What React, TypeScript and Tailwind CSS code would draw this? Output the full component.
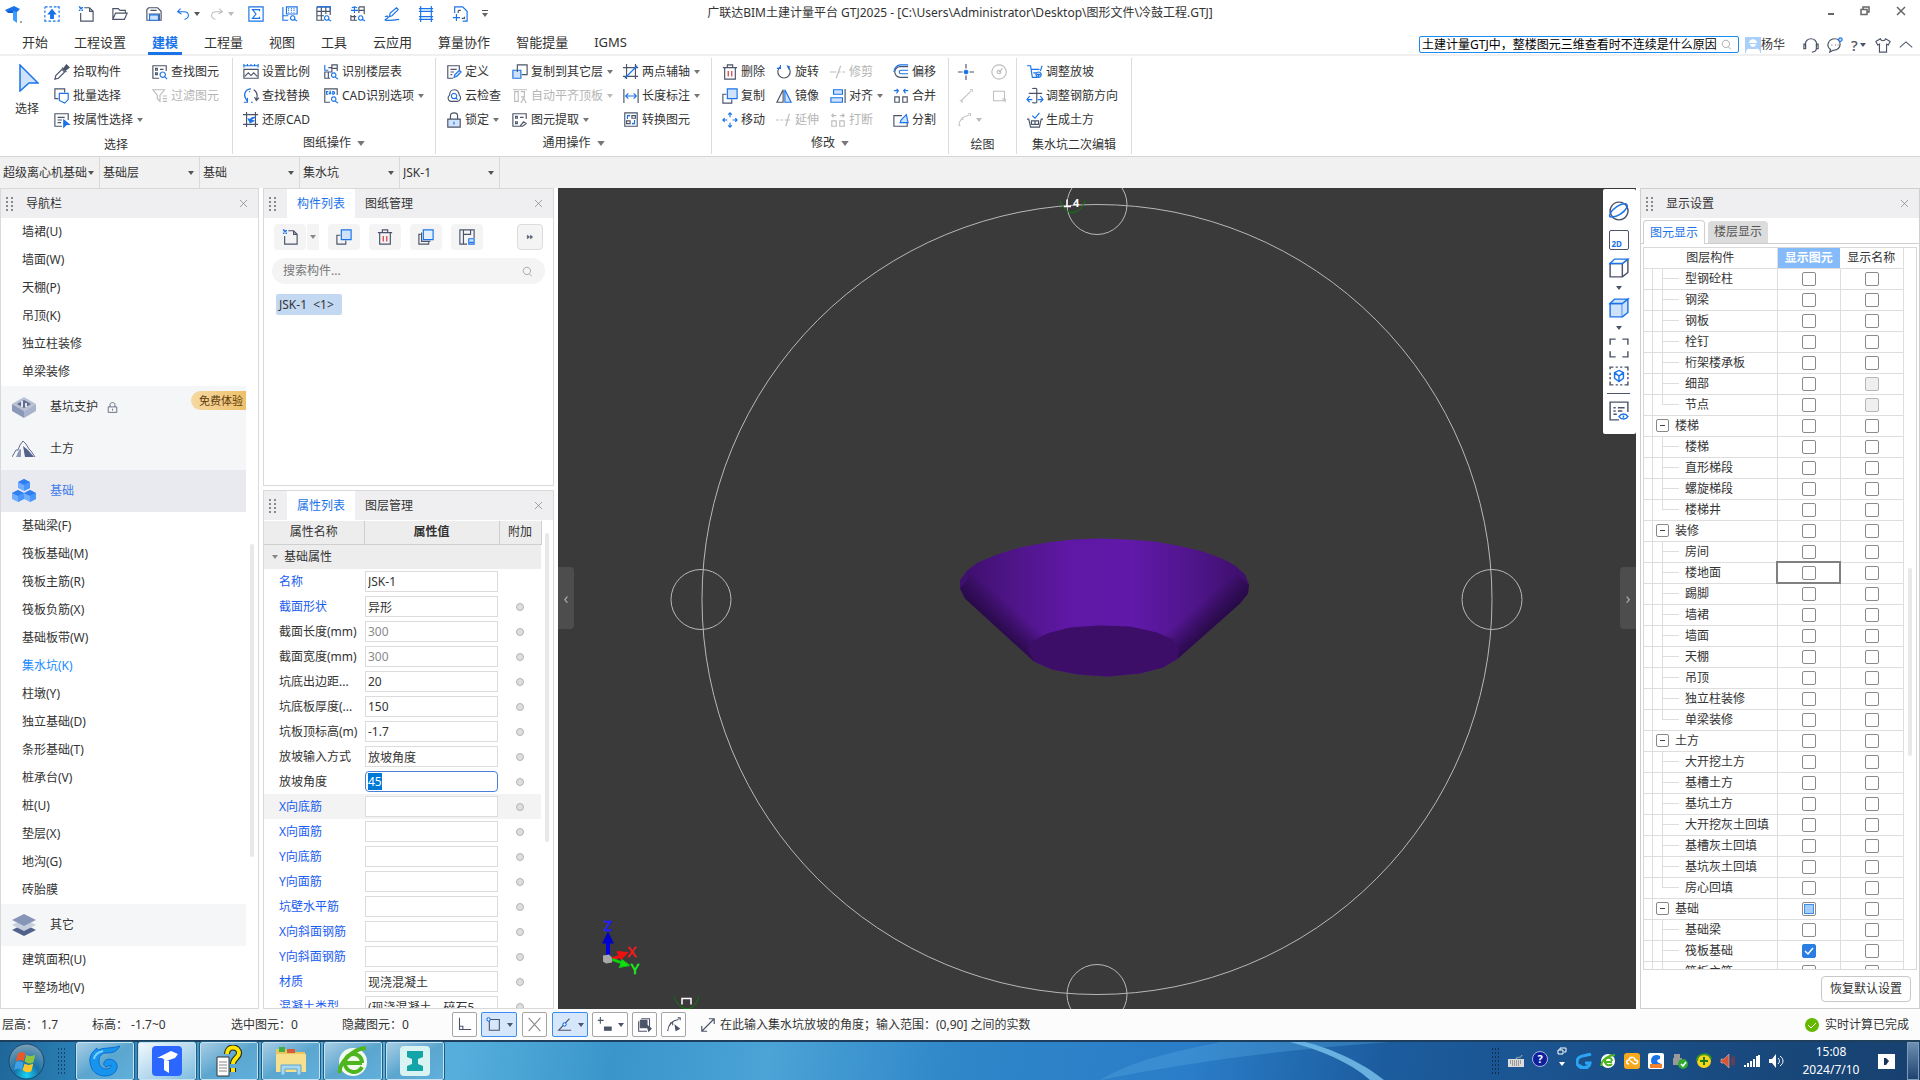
import React, { useEffect, useRef } from "react";
import clsx from "clsx";

// [stroke, path, fill]
type Stroke = [string, string, string?];

const B = "#1a73e8";
const D = "#4b5468";
const L = "#cfe2fb";
const G = "#bdbdbd";
const R = "#d93030";

const glyphs: Record<string, Stroke[]> = {
  recent: [[B, "M1 1h3M6 1h3M11 1h3M15 1h2v2M17 5v3M17 10v3M17 15v2h-2M13 17h-3M8 17H5M3 17H1v-2M1 13v-3M1 8V5M1 3V1"], [B, "M9 4l4 5h-2.5v5h-3V9H5z", B]],
  newFile: [[D, "M7 2h6l4 4v11H3V8M13 2v4h4"], [B, "M1 1h1v1h1v1h1V2h1V1M1 5h1V4M4 5h1V4"]],
  open: [[D, "M1 15V3h6l2 2h6v3M1 15L4 8h13l-3 7z"]],
  save: [[D, "M3 2h10l4 4v10H1V4zM5 5h7M3 9h12v7"], [B, "M4 10h10v6H4z", L]],
  undo: [[B, "M6 2L2 6l5 3M2 6h8c4 0 6 2 6 5s-2 4-5 5"]],
  redo: [[G, "M12 2l4 4-5 3M16 6H8C4 6 2 8 2 11s2 4 5 5"]],
  sigma: [[B, "M1 1h16v16H1zM13 6V4H5l4 5-4 5h8v-2"]],
  tableFind: [[B, "M1 1v15h6M1 11h6M5 1h12v8H5zM7 3h1M10 3h1M13 3h1M7 5h1M10 5h1M13 5h1M7 7h1M10 7h1M13 7h1"], [B, "M12 11a2.500 2.500 0 1 0 .1 0M14 15l3 2"]],
  gridFind: [[D, "M1 1h15v9M1 1v15h8M1 6h15M1 11h8M6 1v15M11 1v8"], [B, "M12 11a2.500 2.500 0 1 0 .1 0M14 15l3 2M1 1h15v4"]],
  swapFind: [[B, "M5 1v7M1 5h8M2 2l3-1 3 1M12 11a2.500 2.500 0 1 0 .1 0M14 15l3 2"], [D, "M10 1h6v8M10 1v7M1 10v6h7M1 12h6M5 10v6M10 5h6"]],
  brush: [[B, "M6 12l1-4 7-6 2 2-7 7zM6 12l3-1M1 12c4-2 5 1 1 3s8 1 15 0"]],
  rebar: [[B, "M3 0v18M15 0v18"], [B, "M1 3h16M1 6h16M1 12h16M1 15h16"]],
  addPage: [[B, "M3 8V1h9l5 5v11h-5M1 13h8M5 9v8"], [D, "M7 5h3M7 5v3M14 12v2h-3"]],
  cursor: [[B, "M2 1l14 13H8l-6 5z", L]],
  pick: [[D, "M1 17l1-4 7-7 3 3-7 7z"], [D, "M9 4l5 5M11 5l3-4 3 3-4 3z", D]],
  batch: [[D, "M5 12H1V1h11v4"], [B, "M6 6h10v7l-4 4-6-3z", "#fff"]],
  byProp: [[D, "M9 16H1V2h15v7M4 6h8M4 9h5M4 12h4"], [B, "M11 9l6 5h-3l-3 3z", B]],
  findEl: [[D, "M8 16H1V2h15v6M4 5h2v2H4zM9 6h4M4 10h2v2H4z"], [B, "M12 9a3 3 0 1 0 .1 0M14 14l3 3"]],
  filter: [[G, "M1 2h13L9 8v7l-3-3V8zM12 9h5M12 12h5M12 15h5"]],
  scale: [[B, "M1 2h16M1 0v4M17 0v4M5 2V0M9 2V0M13 2V0"], [D, "M1 6h16v10H1zM2 14l4-4 3 3 3-3 4 4"]],
  replace: [[D, "M12 2c3 2 5 6 3 11M13 10l2 4 3-3"], [B, "M9 1C3 1 0 7 3 12l2 3M5 11v5H1M9 16h2M7 4h1"]],
  restore: [[D, "M4 0v17M14 0v17M0 3h17M0 14h17"], [B, "M14 6c-4 0-6 1-6 4M6 8l2 4 4-2z", B]],
  floorTable: [[B, "M2 1v6h4"], [D, "M6 4h4V1h6v7M10 4v5H2v7h6M6 9v7M10 5h6"], [B, "M12 10a2.500 2.500 0 1 0 .1 0M14 15l3 2"]],
  cad: [[D, "M8 16H2V1h14v7"], [B, "M6 4H4v3h2M7 7l1-3 1 3M11 4v3h1l1-1V5l-1-1zM12 10a2.500 2.500 0 1 0 .1 0M14 15l3 2"]],
  define: [[D, "M8 16H2V2h13v5M5 6h7M5 9h4M5 12h2"], [B, "M9 15l1-3 5-5 2 2-5 5z", L]],
  cloud: [[D, "M5 15a4 4 0 0 1-1-7c0-8 10-8 11 0a4 4 0 0 1-2 7z"], [B, "M9 6a3 3 0 1 0 .1 0M11 11l2 2"]],
  lock: [[D, "M5 8V4c0-4 8-4 8 0v4"], [D, "M2 8h14v9H2z", L], [B, "M9 11v3"]],
  navLock: [[D, "M5 8V4c0-4 8-4 8 0v4M2 8h14v9H2zM9 11v3"]],
  copyFloor: [[B, "M1 7h9v9H1z", L], [D, "M6 9V1h11v11h-6"]],
  alignTop: [[G, "M1 2h16M3 4h4v11H3zM10 4h4v6h-4M10 17l3-6 3 6"]],
  extract: [[D, "M8 16H1V2h15v6M4 5h2v2H4zM9 6h4M4 11h2v2H4zM9 16l4-5 3 2-4 3z"]],
  twoPoint: [[D, "M4 0v17M14 0v17M0 4h17M0 14h17"], [B, "M2 16L16 2"]],
  length: [[D, "M1 1v16M17 1v16"], [B, "M3 9h12M6 6L3 9l3 3M12 6l3 3-3 3"]],
  convert: [[D, "M2 1h14v15H2zM10 4h4v3h-4zM4 10h4v3H4z"], [B, "M5 8V4h3M7 3v2M13 9v4h-3M11 12v2"]],
  trash: [[D, "M1 4h16M6 4V1h6v3M3 4v13h12V4"], [R, "M7 8v6M11 8v6"]],
  copy: [[D, "M5 7H1v10h10v-4"], [B, "M6 1h11v11H6z", L]],
  move: [[B, "M9 1v5M9 12v5M1 9h5M12 9h5M7 3l2-2 2 2M7 15l2 2 2-2M3 7L1 9l2 2M15 7l2 2-2 2"]],
  rotate: [[D, "M5 3a7 7 0 1 0 8 0"], [B, "M5 1v4H1M12 2l3 1-1 3"]],
  mirror: [[D, "M8 2v14H1z"], [B, "M10 2v14h7z", L]],
  extend: [[G, "M0 9h3M5 9h3M10 9h6M15 2l-4 14"]],
  trim: [[G, "M0 9h7M10 9h2M14 9h3M12 2l-5 14"]],
  align: [[D, "M17 1v16"], [B, "M4 2h10v5H4zM1 11h13v5H1z", L]],
  breakIt: [[G, "M2 10h5v6H2zM11 10h5v6h-5zM2 4h5M4 2L2 4l2 2M16 4h-5M14 2l2 2-2 2"]],
  offset: [[D, "M17 3H8a6 6 0 0 0 0 12h9"], [B, "M17 7H9a2 2 0 0 0 0 4h8M17 1H8a8 8 0 0 0-7 8"]],
  merge: [[D, "M2 10h5v6H2zM11 10h5v6h-5z"], [B, "M1 3h5M4 1l2 2-2 3M17 3h-5M14 1l-2 2 2 3"]],
  split: [[D, "M10 4H1v12h15v-5"], [B, "M8 12l1-3 6-6 2 9z", L]],
  point: [[D, "M9 0v5M9 13v5M0 9h5M13 9h5"], [B, "M9 7a2 2 0 1 0 .1 0", B]],
  line: [[G, "M3 15L15 3M1 15h3v3M14 1h3v3"]],
  arc: [[G, "M1 16C2 9 7 4 14 3M1 16h2M13 1h3v3M5 7l2 2"]],
  circle: [[G, "M9 1a8 8 0 1 0 .1 0M9 9l4-4M9 7a2 2 0 1 0 .1 0"]],
  rect: [[G, "M2 3h14v12H2zM13 13h4v4"]],
  slope: [[B, "M0 2h4l2 13h6M5 6h9M7 10h4M17 2l-2 6"], [B, "M13 9a3 3 0 1 0 .1 0M13 11v3M11 12h4", L]],
  rebarDir: [[D, "M6 1c0-1 5-1 5 0v15c0 1-5 1-5 0M2 6h15"], [B, "M3 9l-3 4 3 3M15 9l3 4-3 3M1 13h5M12 13h5"]],
  earth: [[B, "M6 4l3 3 5-6"], [D, "M0 8h2l2 9h10l2-9h2M5 10h8v4H5zM9 10v4"]],
  copyTo: [[D, "M3 6H1v11h11v-2M4 4v10h10"], [B, "M6 1h11v11H6z", "#e3f0ff"]],
  saveList: [[D, "M9 17H1V1h16v9M5 1v16M5 6h8V1"], [B, "M11 11h6v6h-6zM12 15h4", L]],
  orbit: [[D, "M9 1a8 8 0 1 0 .1 0"], [B, "M3 14C-2 16 1 9 7 5s11-3 9 1-9 9-13 8"]],
  cube: [[D, "M1 5h11v12H1zM12 17l5-4V1M12 5l5-4"], [B, "M1 5l4-4h12l-5 4z", "#ffffff"]],
  cubeFill: [[B, "M1 5h11v12H1z", L], [B, "M12 17l5-4V1l-5 4M1 5l4-4h12l-5 4z", L]],
  frame: [[D, "M1 6V1h5M12 1h5v5M17 12v5h-5M6 17H1v-5"]],
  isolate: [[D, "M1 3V1h3M6 1h2M10 1h2M14 1h3v3M17 6v2M17 10v2M17 14v3h-3M12 17h-2M8 17H6M4 17H1v-3M1 12v-2M1 8V6"], [B, "M9 4l4 2v5l-4 3-4-3V6zM5 6l4 3 4-3M9 9v5"]],
  layerEye: [[D, "M9 17H1V1h16v9M4 6h2M8 6h6M4 9h2M8 9h4M4 12h3"], [B, "M9 14c2-3 6-3 8 0-2 3-6 3-8 0zM13 13v2"]],
  ortho: [[D, "M3 1v14h14M3 11h4v4"]],
  snapRect: [[D, "M4 3h12v13H4z"], [B, "M3 1a2 2 0 1 0 .1 0", "#fff"]],
  cross: [["#888", "M2 1l14 16M16 1L2 17"]],
  angle: [[D, "M15 2L2 16h15"], [B, "M9 7a2 2 0 1 0 .1 0", "#fff"]],
  plusMinus: [[D, "M1 4h7M4 0v8"], [D, "M9 12h8v4H9z", D]],
  stack: [[D, "M2 5v12h10M5 2h10v12"], [D, "M4 4h8v9H4z", D], [D, "M12 10l5 4-3 3z", D]],
  polyArc: [[D, "M2 17C3 9 7 4 15 3M14 1h3v3M5 7h3v3"], [D, "M11 10l5 4-4 2z", D]],
  expand: [[D, "M2 16L16 2M10 2h6v6M2 10v6h6"]],
  headset: [[D, "M3 12C1 3 7 2 9 2s8 1 6 10M3 8H1v5h2zM15 8h2v5h-2zM15 13c0 3-2 4-5 4"]],
  chat: [[D, "M7 15l-4 2 1-3C-2 10 2 2 9 2s9 12-2 13M5 9h1M9 9h1M12 9h1"], [B, "M15 1a2 2 0 1 0 .1 0", L]],
  shirt: [[D, "M6 2L1 5l2 4 2-1v9h8V8l2 1 2-4-5-3c-1 3-5 3-6 0z"]],
  up: [[D, "M1 12l8-7 8 7"]],
  search: [["#999", "M8 2a6 6 0 1 0 .1 0M12 13l4 4"]],
  close: [["#777", "M2 2l14 14M16 2L2 16"]],
  more: [[D, "M3 5l5 4-5 4zM10 5l5 4-5 4z", D]],
};

function Glyph({ name, className = "size-4" }: { name: string; className?: string }) {
  return (
    <svg viewBox="0 0 18 18" className={clsx("shrink-0 overflow-visible", className)} aria-hidden="true">
      {glyphs[name].map(([stroke, d, fill], i) => (
        <path key={i} d={d} stroke={stroke} fill={fill ?? "none"} strokeWidth="1.3" />
      ))}
    </svg>
  );
}

function Caret({ className = "text-[#666]" }: { className?: string }) {
  return (
    <svg viewBox="0 0 6 4" className={clsx("h-1 w-1.5 shrink-0", className)} aria-hidden="true">
      <path d="M0 0h6L3 4z" fill="currentColor" />
    </svg>
  );
}

function Grip() {
  return (
    <span className="grid w-[7px] grid-cols-2 gap-x-[3px] gap-y-[2px]" aria-hidden="true">
      {Array.from({ length: 8 }, (_, i) => (
        <i key={i} className="size-[2px] bg-[#8a8a8a]" />
      ))}
    </span>
  );
}

/* ---------- title bar ---------- */

const quickTools = [
  { icon: "recent", label: "最近" },
  { icon: "newFile", label: "新建" },
  { icon: "open", label: "打开" },
  { icon: "save", label: "保存" },
  { icon: "undo", label: "撤销", caret: true },
  { icon: "redo", label: "恢复", caret: true },
  { icon: "sigma", label: "汇总计算" },
  { icon: "tableFind", label: "查看报表" },
  { icon: "gridFind", label: "查看工程量" },
  { icon: "swapFind", label: "查看计算式" },
  { icon: "brush", label: "编辑钢筋" },
  { icon: "rebar", label: "钢筋三维" },
  { icon: "addPage", label: "添加" },
];

function TitleBar() {
  return (
    <header className="relative flex h-[27px] items-center justify-between">
      <div className="flex items-center">
        <span className="flex w-[35px] justify-center pr-2">
          <svg viewBox="0 0 20 20" className="size-5" aria-label="GTJ">
            <path d="M1 6l9-4 6 3-3 3H9z" fill="#1a73e8" />
            <path d="M9 7l4 1v11l-4-3z" fill="#3aa0ff" />
            <path d="M1 6l8 1v2H4z" fill="#0f5fd0" />
            <circle cx="17" cy="18" r="1" fill="#888" />
          </svg>
        </span>
        {quickTools.map((t) => (
          <button key={t.label} aria-label={t.label} className="flex h-6 w-[34px] items-center justify-center gap-1">
            <Glyph name={t.icon} className={t.caret ? "size-[14px]" : "size-4"} />
            {t.caret && <Caret className={t.icon === "redo" ? "text-[#bbb]" : "text-[#555]"} />}
          </button>
        ))}
        <button aria-label="自定义快速访问" className="flex w-4 flex-col items-center gap-[2px]">
          <i className="h-px w-[6px] bg-[#555]" />
          <Caret />
        </button>
      </div>
      <h1 className="absolute inset-x-0 top-1 mx-auto w-fit text-[12px] leading-[18px] text-[#333]">
        广联达BIM土建计量平台 GTJ2025 - [C:\Users\Administrator\Desktop\图形文件\冷鼓工程.GTJ]
      </h1>
      <div className="flex items-center gap-[26px] pr-[14px] pb-[6px]">
        <button aria-label="最小化" className="flex size-[10px] items-end justify-end pb-px">
          <i className="h-[2px] w-[6px] bg-[#666]" />
        </button>
        <button aria-label="还原">
          <svg viewBox="0 0 10 10" className="size-[10px]" fill="none" stroke="#666">
            <path d="M3 3V1h6v5H7M1 3.500h6v5H1z" strokeWidth="1.500" />
          </svg>
        </button>
        <button aria-label="关闭">
          <svg viewBox="0 0 10 10" className="size-[10px]" stroke="#666" strokeWidth="1.500">
            <path d="M1 1l8 8M9 1L1 9" />
          </svg>
        </button>
      </div>
    </header>
  );
}

const menus = ["开始", "工程设置", "建模", "工程量", "视图", "工具", "云应用", "算量协作", "智能提量", "IGMS"];

function MenuBar() {
  return (
    <div className="flex h-[29px] items-center justify-between border-b-2 border-[#f0f0f0]">
      <nav className="flex h-[29px] pl-[14px]">
        {menus.map((m) => (
          <button
            key={m}
            className={clsx(
              "mx-1 border-b-[3px] px-1 pt-[6px] text-[13px] leading-5",
              m === "建模" ? "border-[#1a73e8] font-bold text-[#1a73e8]" : "border-transparent",
              "[&:not(:last-child)]:mr-[14px]"
            )}
          >
            {m}
          </button>
        ))}
      </nav>
      <div className="flex items-center pt-2">
        <div className="flex h-[17px] w-[320px] items-center rounded-xs border border-[#1a8cf0] bg-white pr-1.5 pl-0.5">
          <input
            aria-label="搜索帮助"
            defaultValue="土建计量GTJ中，整楼图元三维查看时不连续是什么原因"
            className="w-full min-w-0 text-[12px] text-black outline-none"
          />
          <Glyph name="search" className="ml-1 size-[11px]" />
        </div>
        <button className="ml-[6px] flex items-center text-[12px]">
          <svg viewBox="0 0 16 16" className="size-4">
            <path d="M0 0h16v16H0z" fill="#a9cffb" />
            <path d="M4 6c0-5 8-5 8 0H4zM5 7h6c0 4-6 4-6 0zM1 16c0-6 4-4 7-4s7-2 7 4z" fill="#fff" />
          </svg>
          杨华
        </button>
        <div className="ml-[18px] flex items-center gap-2 pr-[7px]">
          <button aria-label="客服"><Glyph name="headset" /></button>
          <button aria-label="消息"><Glyph name="chat" /></button>
          <button className="flex w-4 items-center gap-0.5 text-[15px] leading-4 font-medium text-[#4b5468]" aria-label="帮助">
            ?<Caret className="text-[#4b5468]" />
          </button>
          <button aria-label="皮肤"><Glyph name="shirt" /></button>
          <button aria-label="收起功能区"><Glyph name="up" className="size-[14px]" /></button>
        </div>
      </div>
    </div>
  );
}

/* ---------- ribbon ---------- */

interface Tool {
  icon: string;
  label: string;
  caret?: boolean;
  off?: boolean;
}

function ToolColumn({ tools, className }: { tools: Tool[]; className: string }) {
  return (
    <div className={clsx("flex flex-col", className)}>
      {tools.map((t) => (
        <button
          key={t.label}
          disabled={t.off}
          className={clsx("flex h-6 items-center gap-[3px] whitespace-nowrap", t.off && "text-[#b5b5b5]")}
        >
          <Glyph name={t.icon} />
          {t.label}
          {t.caret && <Caret className={clsx("ml-px", t.off ? "text-[#bbb]" : "text-[#777]")} />}
        </button>
      ))}
    </div>
  );
}

function RibbonGroup({
  title,
  caret,
  flush,
  className,
  children,
}: {
  title: string;
  caret?: boolean;
  flush?: boolean;
  className: string;
  children: React.ReactNode;
}) {
  return (
    <section className={clsx("my-[2px] shrink-0 border-r border-[#dcdcdc] pt-[2px]", className)}>
      <div className={clsx("flex", !flush && "pl-[10px]")}>{children}</div>
      <div className={clsx("flex items-center justify-center gap-1.5", caret ? "h-[22px]" : "h-[25px]")}>
        {title}
        {caret && <Caret className="h-[5px] w-2 text-[#777]" />}
      </div>
    </section>
  );
}

function Ribbon() {
  return (
    <div className="flex h-[101px] border-b border-[#d6d6d6] text-[12px]">
      <RibbonGroup title="选择" flush className="w-[233px]">
        <button className="flex w-[54px] flex-col items-center gap-2 pt-1">
          <svg viewBox="0 0 20 28" className="ml-1 h-[28px] w-5">
            <path d="M1 1l18 18h-9l-9 8z" fill={L} stroke={B} strokeWidth="1.500" />
          </svg>
          选择
        </button>
        <ToolColumn
          className="w-[98px]"
          tools={[
            { icon: "pick", label: "拾取构件" },
            { icon: "batch", label: "批量选择" },
            { icon: "byProp", label: "按属性选择", caret: true },
          ]}
        />
        <ToolColumn
          className="w-20"
          tools={[
            { icon: "findEl", label: "查找图元" },
            { icon: "filter", label: "过滤图元", off: true },
          ]}
        />
      </RibbonGroup>
      <RibbonGroup title="图纸操作" caret className="w-[203px]">
        <ToolColumn
          className="w-20"
          tools={[
            { icon: "scale", label: "设置比例" },
            { icon: "replace", label: "查找替换" },
            { icon: "restore", label: "还原CAD" },
          ]}
        />
        <ToolColumn
          className="w-[110px]"
          tools={[
            { icon: "floorTable", label: "识别楼层表" },
            { icon: "cad", label: "CAD识别选项", caret: true },
          ]}
        />
      </RibbonGroup>
      <RibbonGroup title="通用操作" caret className="w-[276px]">
        <ToolColumn
          className="w-[66px]"
          tools={[
            { icon: "define", label: "定义" },
            { icon: "cloud", label: "云检查" },
            { icon: "lock", label: "锁定", caret: true },
          ]}
        />
        <ToolColumn
          className="w-[111px]"
          tools={[
            { icon: "copyFloor", label: "复制到其它层", caret: true },
            { icon: "alignTop", label: "自动平齐顶板", caret: true, off: true },
            { icon: "extract", label: "图元提取", caret: true },
          ]}
        />
        <ToolColumn
          className="w-20"
          tools={[
            { icon: "twoPoint", label: "两点辅轴", caret: true },
            { icon: "length", label: "长度标注", caret: true },
            { icon: "convert", label: "转换图元" },
          ]}
        />
      </RibbonGroup>
      <RibbonGroup title="修改" caret className="w-[237px]">
        <ToolColumn
          className="w-[54px]"
          tools={[
            { icon: "trash", label: "删除" },
            { icon: "copy", label: "复制" },
            { icon: "move", label: "移动" },
          ]}
        />
        <ToolColumn
          className="w-[54px]"
          tools={[
            { icon: "rotate", label: "旋转" },
            { icon: "mirror", label: "镜像" },
            { icon: "extend", label: "延伸", off: true },
          ]}
        />
        <ToolColumn
          className="w-[63px]"
          tools={[
            { icon: "trim", label: "修剪", off: true },
            { icon: "align", label: "对齐", caret: true },
            { icon: "breakIt", label: "打断", off: true },
          ]}
        />
        <ToolColumn
          className="w-[50px]"
          tools={[
            { icon: "offset", label: "偏移" },
            { icon: "merge", label: "合并" },
            { icon: "split", label: "分割" },
          ]}
        />
      </RibbonGroup>
      <RibbonGroup title="绘图" flush className="w-[68px]">
        <div className="grid h-[72px] w-full grid-cols-2 grid-rows-3 place-items-center">
          <button aria-label="点"><Glyph name="point" /></button>
          <button aria-label="圆"><Glyph name="circle" /></button>
          <button aria-label="直线"><Glyph name="line" className="size-[14px]" /></button>
          <button aria-label="矩形"><Glyph name="rect" className="size-[14px]" /></button>
          <button aria-label="弧" className="flex items-center gap-1 pl-2">
            <Glyph name="arc" className="size-[14px]" />
            <Caret className="text-[#bbb]" />
          </button>
        </div>
      </RibbonGroup>
      <RibbonGroup title="集水坑二次编辑" className="w-[115px]">
        <ToolColumn
          className="w-24"
          tools={[
            { icon: "slope", label: "调整放坡" },
            { icon: "rebarDir", label: "调整钢筋方向" },
            { icon: "earth", label: "生成土方" },
          ]}
        />
      </RibbonGroup>
    </div>
  );
}

const pickers = [
  { label: "工程", value: "超级离心机基础" },
  { label: "楼层", value: "基础层" },
  { label: "构件大类", value: "基础" },
  { label: "构件类型", value: "集水坑" },
  { label: "构件", value: "JSK-1" },
];

function PickerBar() {
  return (
    <div className="flex h-[31px] bg-[#f1f1f1] text-[12px]">
      {pickers.map((p) => (
        <div key={p.label} className="relative w-[100px] border-r border-[#d9d9d9]">
          <select aria-label={p.label} className="h-full w-full appearance-none bg-transparent pl-[3px] outline-none">
            <option>{p.value}</option>
          </select>
          <span className="pointer-events-none absolute inset-y-0 right-[5px] flex items-center">
            <Caret className="text-[#555]" />
          </span>
        </div>
      ))}
    </div>
  );
}

/* ---------- navigation ---------- */

function PanelHeader({ children }: { children: React.ReactNode }) {
  return (
    <div className="flex h-[29px] shrink-0 items-center bg-[#efeff1] pl-[5px] text-[12px]">
      <Grip />
      {children}
      <button aria-label="关闭面板" className="mr-[10px] ml-auto">
        <Glyph name="close" className="size-[9px]" />
      </button>
    </div>
  );
}

function NavItem({ label, active }: { label: string; active?: boolean }) {
  return (
    <li>
      <button className={clsx("flex h-7 w-full items-center pl-[21px]", active && "text-[#1a8cff]")}>{label}</button>
    </li>
  );
}

function NavGroup({ label, icon, active, lock, badge }: {
  label: string;
  icon: React.ReactNode;
  active?: boolean;
  lock?: boolean;
  badge?: string;
}) {
  return (
    <li className={clsx("relative mr-3", active ? "bg-[#e9eaef]" : "bg-[#f5f6f8]")}>
      <button className={clsx("flex h-[42px] w-full items-center pl-[11px]", active && "text-[#3f7be8]")}>
        <svg viewBox="0 0 24 24" className="size-6" aria-hidden="true">{icon}</svg>
        <span className="ml-[14px]">{label}</span>
        {lock && <Glyph name="navLock" className="ml-[9px] size-[11px]" />}
      </button>
      {badge && (
        <span className="absolute top-[5px] right-0 rounded-l-full bg-gradient-to-r from-[#f5d9a2] to-[#eec069] pr-[3px] pl-2 text-[11px] leading-[19px] text-[#5c3a10]">
          {badge}
        </span>
      )}
    </li>
  );
}

const pitIcon = (
  <>
    <path d="M12 2l12 7-12 7L0 9z" fill="#b9c1d4" />
    <path d="M0 9l12 7v7L0 16z" fill="#8c98b8" />
    <path d="M24 9l-12 7v7l12-7z" fill="#a9b3cb" />
    <path d="M12 5l7 4-7 4-7-4z" fill="#5e6c90" />
    <path d="M9 6h2v6H9zM13 8h2v4h-2z" fill="#dfe4ee" />
  </>
);
const hillIcon = (
  <>
    <path d="M0 20l4-7 2 0 2-5 3-4 3 3 3 5 2 2 4 6" fill="none" stroke="#5e6c90" />
    <path d="M11 9l5 4 6 7h-9z" fill="#52628a" />
    <path d="M7 13l2-1v8H4z" fill="#8c98b8" />
  </>
);
const cubesIcon = (
  <>
    {["M12 0l6 3v6l-6 3-6-3V3z", "M6 11l6 3v6l-6 3-6-3v-6z", "M18 11l6 3v6l-6 3-6-3v-6z"].map((d) => (
      <path key={d} d={d} fill="#72aefc" />
    ))}
    {["M12 0l6 3-6 3-6-3z", "M6 11l6 3-6 3-6-3z", "M18 11l6 3-6 3-6-3z"].map((d) => (
      <path key={d} d={d} fill="#2f7ff0" />
    ))}
    {["M12 6l6-3v6l-6 3z", "M6 17l6-3v6l-6 3z", "M18 17l6-3v6l-6 3z"].map((d) => (
      <path key={d} d={d} fill="#4a96fa" />
    ))}
  </>
);
const layersIcon = (
  <>
    <path d="M0 17l12-6 12 6-12 6z" fill="#52628a" />
    <path d="M0 12l12-6 12 6-12 6z" fill="#c8cfdf" />
    <path d="M0 7l12-6 12 6-12 6z" fill="#8795b8" />
  </>
);

const finishItems = ["墙裙(U)", "墙面(W)", "天棚(P)", "吊顶(K)", "独立柱装修", "单梁装修"];
const foundationItems = [
  "基础梁(F)", "筏板基础(M)", "筏板主筋(R)", "筏板负筋(X)", "基础板带(W)", "集水坑(K)", "柱墩(Y)",
  "独立基础(D)", "条形基础(T)", "桩承台(V)", "桩(U)", "垫层(X)", "地沟(G)", "砖胎膜",
];

function NavPanel() {
  return (
    <aside className="relative flex w-[259px] shrink-0 flex-col border border-[#d9d9d9] bg-white text-[12px]">
      <PanelHeader>
        <h2 className="ml-[13px]">导航栏</h2>
      </PanelHeader>
      <ul className="min-h-0 flex-1 overflow-hidden">
        {finishItems.map((n) => <NavItem key={n} label={n} />)}
        <NavGroup label="基坑支护" icon={pitIcon} lock badge="免费体验" />
        <NavGroup label="土方" icon={hillIcon} />
        <NavGroup label="基础" icon={cubesIcon} active />
        {foundationItems.map((n) => <NavItem key={n} label={n} active={n === "集水坑(K)"} />)}
        <NavGroup label="其它" icon={layersIcon} />
        <NavItem label="建筑面积(U)" />
        <NavItem label="平整场地(V)" />
      </ul>
      <i className="absolute top-[355px] right-1 h-[313px] w-1 rounded-full bg-[#e8e8e8]" />
    </aside>
  );
}

/* ---------- components and properties ---------- */

function PanelTabs({ tabs }: { tabs: string[] }) {
  return (
    <div className="ml-[11px] flex h-full">
      {tabs.map((t, i) => (
        <button key={t} className={clsx("w-[68px]", i === 0 && "bg-white text-[#1a73e8]")}>
          {t}
        </button>
      ))}
    </div>
  );
}

function ComponentPanel() {
  const btn = "flex h-[26px] w-8 items-center justify-center rounded-sm bg-[#f4f4f5]";
  return (
    <section className="flex h-[298px] shrink-0 flex-col border border-[#d9d9d9] bg-white">
      <PanelHeader>
        <PanelTabs tabs={["构件列表", "图纸管理"]} />
      </PanelHeader>
      <div className="mt-[6px] flex gap-[9px] px-[10px]">
        <div className="flex gap-px">
          <button aria-label="新建构件" className={btn}><Glyph name="newFile" /></button>
          <button aria-label="新建选项" className="flex h-[26px] w-3 items-center justify-center bg-[#f4f4f5]">
            <Caret className="text-[#888]" />
          </button>
        </div>
        <button aria-label="复制构件" className={btn}><Glyph name="copy" /></button>
        <button aria-label="删除构件" className={btn}><Glyph name="trash" /></button>
        <button aria-label="层间复制" className={btn}><Glyph name="copyTo" /></button>
        <button aria-label="构件存盘" className={btn}><Glyph name="saveList" /></button>
        <button aria-label="更多" className="ml-auto flex h-[26px] w-[26px] items-center justify-center rounded-sm border border-[#dcdcdc] bg-[#f4f4f5]">
          <Glyph name="more" className="size-2" />
        </button>
      </div>
      <div className="mx-2 mt-2 flex h-[26px] items-center rounded-full bg-[#f4f4f4] pr-3 pl-[11px]">
        <input aria-label="搜索构件" placeholder="搜索构件..." className="w-full text-[12px] outline-none placeholder:text-[#777]" />
        <Glyph name="search" className="size-[11px]" />
      </div>
      <button className="mt-[10px] ml-3 w-fit rounded-xs bg-[#c3d9f2] pr-2 pl-[3px] text-[12px] leading-[21px]">
        JSK-1&nbsp; &lt;1&gt;
      </button>
    </section>
  );
}

interface Prop {
  name: string;
  value?: string;
  link?: boolean;
  off?: boolean;
}

const props: Prop[] = [
  { name: "名称", value: "JSK-1", link: true },
  { name: "截面形状", value: "异形", link: true },
  { name: "截面长度(mm)", value: "300", off: true },
  { name: "截面宽度(mm)", value: "300", off: true },
  { name: "坑底出边距...", value: "20" },
  { name: "坑底板厚度(...", value: "150" },
  { name: "坑板顶标高(m)", value: "-1.7" },
  { name: "放坡输入方式", value: "放坡角度" },
  { name: "放坡角度", value: "45" },
  { name: "X向底筋", link: true },
  { name: "X向面筋", link: true },
  { name: "Y向底筋", link: true },
  { name: "Y向面筋", link: true },
  { name: "坑壁水平筋", link: true },
  { name: "X向斜面钢筋", link: true },
  { name: "Y向斜面钢筋", link: true },
  { name: "材质", value: "现浇混凝土", link: true },
  { name: "混凝土类型", value: "(现浇混凝土　碎石5...", link: true },
];

function PropertyPanel() {
  const editing = useRef<HTMLInputElement>(null);

  useEffect(() => {
    editing.current?.focus();
    editing.current?.select();
  }, []);

  return (
    <section className="relative flex min-h-0 flex-1 flex-col border border-[#d9d9d9] bg-white text-[12px]">
      <PanelHeader>
        <PanelTabs tabs={["属性列表", "图层管理"]} />
      </PanelHeader>
      <div className="mt-px min-h-0 flex-1 overflow-hidden">
        <table className="w-[277px] table-fixed border-collapse">
          <colgroup>
            <col className="w-[100px]" />
            <col className="w-[135px]" />
            <col className="w-[42px]" />
          </colgroup>
          <thead>
            <tr className="h-[23px] border-b border-[#cfcfcf] bg-[#ededed]">
              <th className="border-r border-[#cfcfcf] font-normal">属性名称</th>
              <th className="border-r border-[#cfcfcf]">属性值</th>
              <th className="border-r border-[#cfcfcf] font-normal">附加</th>
            </tr>
          </thead>
          <tbody>
            <tr className="h-[25px] bg-[#ededed]">
              <td colSpan={3}>
                <button className="flex items-center gap-[6px] pl-2">
                  <Caret className="text-[#888]" />
                  基础属性
                </button>
              </td>
            </tr>
            {props.map((p, i) => (
              <tr key={p.name} className={clsx("h-[25px]", p.name === "X向底筋" && "bg-[#f3f3f3]")}>
                <td className="overflow-visible pl-[15px] whitespace-nowrap">
                  <label htmlFor={`prop-${i}`} className={p.link ? "text-[#1a5cf0]" : undefined}>{p.name}</label>
                </td>
                <td className="px-px">
                  <input
                    id={`prop-${i}`}
                    ref={p.name === "放坡角度" ? editing : undefined}
                    defaultValue={p.value}
                    disabled={p.off}
                    className="block h-[21px] w-full border border-[#dcdcdc] bg-white px-[2px] outline-none selection:bg-[#0078d7] selection:text-white focus:rounded-sm focus:border-[#4a7fd8] disabled:text-[#8a8a8a]"
                  />
                </td>
                <td>
                  {i > 0 && (
                    <input
                      type="checkbox"
                      aria-label={`附加 ${p.name}`}
                      className="mx-auto block size-2 appearance-none rounded-full border border-[#b5b5b5] bg-[#dedede]"
                    />
                  )}
                </td>
              </tr>
            ))}
          </tbody>
        </table>
      </div>
      <i className="absolute top-[42px] right-1 h-[309px] w-1 rounded-full bg-[#e8e8e8]" />
    </section>
  );
}

/* ---------- 3D view ---------- */

const viewTools = [
  { icon: "cube", label: "三维线框", caret: true },
  { icon: "cubeFill", label: "三维着色", caret: true },
  { icon: "frame", label: "全屏" },
  { icon: "isolate", label: "局部三维" },
];

function Viewport() {
  return (
    <main className="relative min-w-0 flex-1 overflow-hidden bg-[#3a3a3a]">
      <svg viewBox="0 0 1078 820" className="absolute inset-0 h-full w-full" aria-label="集水坑三维模型">
        <defs>
          <linearGradient id="cone" x1="401" x2="691" y1="0" y2="0" gradientUnits="userSpaceOnUse">
            <stop offset="0" stopColor="#3d0f6b" />
            <stop offset="0.2" stopColor="#50158a" />
            <stop offset="0.38" stopColor="#5e18a5" />
            <stop offset="0.6" stopColor="#6019a8" />
            <stop offset="0.8" stopColor="#50158c" />
            <stop offset="1" stopColor="#3c0f69" />
          </linearGradient>
          <linearGradient id="shadeL" x1="439" y1="443" x2="458" y2="421" gradientUnits="userSpaceOnUse">
            <stop offset="0" stopColor="#1d0736" stopOpacity="0.8" />
            <stop offset="1" stopColor="#1d0736" stopOpacity="0" />
          </linearGradient>
          <linearGradient id="shadeR" x1="653" y1="443" x2="634" y2="421" gradientUnits="userSpaceOnUse">
            <stop offset="0" stopColor="#1d0736" stopOpacity="0.8" />
            <stop offset="1" stopColor="#1d0736" stopOpacity="0" />
          </linearGradient>
        </defs>
        <g fill="none" stroke="#b8b8b8">
          <circle cx="539" cy="411" r="395" />
          <circle cx="539" cy="16" r="30" />
          <circle cx="539" cy="806" r="30" />
          <circle cx="143" cy="411" r="30" />
          <circle cx="934" cy="411" r="30" />
        </g>
        <path
          d="M402 392l7-10 11-8 19-8 23-7 27-5 26-3 27-1 27 1 28 2 27 5 21 5 19 7 13 7 10 9 4 10-1 9-8 10-62 55-15 9-23 6-32 3-30-2-26-5-18-8-69-63-5-10z"
          fill="url(#cone)"
        />
        <path d="M402 400l5 10 69 63 30-20-80-82z" fill="url(#shadeL)" />
        <path d="M691 396l-1 9-8 10-62 55-24-20 70-75z" fill="url(#shadeR)" />
        <path d="M470 461l4-8 15-8 23-6 30-2 30 1 27 6 16 7 6 9-1 10-15 9-23 6-32 3-30-2-26-5-18-8z" fill="#3c0e68" />

        <path d="M502 12c2 7 6 12 12 12s10-4 13-12M116 808c3 8 7 12 13 12s9-4 12-12" fill="none" stroke="#0a7d0a" />
        <path d="M506 18h7M509 11v7M124 816v-6h9v6" fill="none" stroke="#fff" strokeWidth="1.500" />
        <text x="515" y="18" fill="#fff" className="text-[11px] font-bold">4</text>

        <path d="M50 768v-14" stroke="#0000e0" strokeWidth="4" />
        <path d="M50 743l6 12H44z" fill="#0000c8" />
        <path d="M52 770l9-3-2-4 11 1-7 7-1-2-8 3z" fill="#f01010" stroke="#f01010" />
        <path d="M54 772l9 3-2 4 11-2-8-6-1 2-8-3z" fill="#10e010" stroke="#10c010" />
        <path d="M45 767l6-1 3 3v5l-6 1-3-2z" fill="#a8a8a8" />
        <g className="text-[15px]" textAnchor="middle" strokeWidth="0.5">
          <text x="50" y="742" fill="#2020ff" stroke="#2020ff">Z</text>
          <text x="74" y="768" fill="#f51a1a" stroke="#f51a1a">X</text>
          <text x="77" y="785" fill="#1af51a" stroke="#1af51a">Y</text>
        </g>
      </svg>

      <button aria-label="收起左侧" className="absolute top-[379px] left-0 h-[62px] w-4 rounded-r-sm bg-[#4d4d4d] text-[16px] text-[#aaa]">
        ‹
      </button>
      <button aria-label="收起右侧" className="absolute top-[379px] right-0 h-[62px] w-4 rounded-l-sm bg-[#4d4d4d] text-[16px] text-[#aaa]">
        ›
      </button>

      <div className="absolute top-px right-0 flex h-[245px] w-[33px] flex-col items-center rounded-xs bg-white pt-3 pr-[2px]">
        <button aria-label="动态观察"><Glyph name="orbit" className="size-5" /></button>
        <button className="mt-[9px] flex size-5 shrink-0 items-end rounded-xs border border-[#4b5468] pl-0.5 text-[8px] leading-[11px] font-bold text-[#1a73e8]">
          2D
        </button>
        {viewTools.map((t) => (
          <button key={t.label} aria-label={t.label} className="mt-2 flex flex-col items-center gap-2">
            <Glyph name={t.icon} className="size-5" />
            {t.caret && <Caret className="text-[#4b5468]" />}
          </button>
        ))}
        <i className="mt-[7px] h-px w-[23px] bg-[#4b5468]" />
        <button aria-label="显示设置" className="mt-[7px]"><Glyph name="layerEye" className="size-5" /></button>
      </div>
    </main>
  );
}

/* ---------- display settings ---------- */

interface Layer {
  name: string;
  group?: boolean;
  state?: "checked" | "mixed";
  focus?: boolean;
  nameOff?: boolean;
}

const layers: Layer[] = [
  { name: "型钢砼柱" },
  { name: "钢梁" },
  { name: "钢板" },
  { name: "栓钉" },
  { name: "桁架楼承板" },
  { name: "细部", nameOff: true },
  { name: "节点", nameOff: true },
  { name: "楼梯", group: true },
  { name: "楼梯" },
  { name: "直形梯段" },
  { name: "螺旋梯段" },
  { name: "楼梯井" },
  { name: "装修", group: true },
  { name: "房间" },
  { name: "楼地面", focus: true },
  { name: "踢脚" },
  { name: "墙裙" },
  { name: "墙面" },
  { name: "天棚" },
  { name: "吊顶" },
  { name: "独立柱装修" },
  { name: "单梁装修" },
  { name: "土方", group: true },
  { name: "大开挖土方" },
  { name: "基槽土方" },
  { name: "基坑土方" },
  { name: "大开挖灰土回填" },
  { name: "基槽灰土回填" },
  { name: "基坑灰土回填" },
  { name: "房心回填" },
  { name: "基础", group: true, state: "mixed" },
  { name: "基础梁" },
  { name: "筏板基础", state: "checked" },
  { name: "筏板主筋" },
];

function Tick({ label, state, disabled }: { label: string; state?: Layer["state"]; disabled?: boolean }) {
  return (
    <span className="relative mx-auto block size-[14px]">
      <input
        type="checkbox"
        aria-label={label}
        defaultChecked={state === "checked"}
        disabled={disabled}
        className="block size-[14px] appearance-none rounded-xs border border-[#8a8a8a] bg-white checked:border-[#2a7de1] checked:bg-[#2a7de1] disabled:border-[#b5b5b5] disabled:bg-[#efefef]"
      />
      {state === "mixed" && (
        <i className="pointer-events-none absolute inset-[2px] border border-[#3b8df0] bg-[#a5cdfa]" />
      )}
      {state === "checked" && (
        <svg viewBox="0 0 14 14" className="pointer-events-none absolute inset-0" fill="none" stroke="#fff" strokeWidth="1.500">
          <path d="M3 7l3 3 5-6" />
        </svg>
      )}
    </span>
  );
}

function LayerName({ layer, last }: { layer: Layer; last: boolean }) {
  if (layer.group) {
    return (
      <div className="flex h-5 items-center">
        <i className="ml-2 h-full w-1 border-l border-[#dedede]" />
        <button
          aria-label={`收起${layer.name}`}
          className="flex size-[13px] items-center justify-center rounded-xs border border-[#888]"
        >
          <i className="h-px w-[5px] bg-[#444]" />
        </button>
        <span className="ml-[6px]">{layer.name}</span>
      </div>
    );
  }
  return (
    <div className="flex h-5 items-center">
      <i className="ml-2 h-full w-[10px] border-l border-[#dedede]" />
      <i className={clsx("w-px self-start bg-[#dedede]", last ? "h-[10px]" : "h-full")} />
      <i className="h-px w-4 bg-[#dedede]" />
      <span className="ml-[6px] whitespace-nowrap">{layer.name}</span>
    </div>
  );
}

function DisplayPanel() {
  return (
    <aside className="ml-1 flex w-[280px] shrink-0 flex-col border border-[#cfcfcf] bg-white text-[12px]">
      <PanelHeader>
        <h2 className="ml-[13px]">显示设置</h2>
      </PanelHeader>
      <div className="mt-[2px] flex h-6 gap-[3px] border-b border-[#cfcfcf] pl-[2px]">
        <button className="-mb-px w-[62px] rounded-t-sm border border-b-0 border-[#cfcfcf] bg-white text-[#1a73e8]">图元显示</button>
        <button className="mt-px w-[60px] rounded-t-sm bg-[#dcdcdc] text-[#555]">楼层显示</button>
      </div>
      <div className="relative mx-[2px] mt-[3px] min-h-0 flex-1 overflow-hidden border border-[#d9d9d9]">
        <table className="w-[259px] table-fixed border-collapse">
          <colgroup>
            <col className="w-[133px]" />
            <col className="w-[63px]" />
            <col className="w-[63px]" />
          </colgroup>
          <thead>
            <tr className="h-5 border-b border-[#dedede]">
              <th className="border-r border-[#dedede] font-normal">图层构件</th>
              <th className="bg-[#85bbfb] text-white">显示图元</th>
              <th className="border-r border-[#dedede] font-normal">显示名称</th>
            </tr>
          </thead>
          <tbody>
            {layers.map((layer, i) => (
              <tr key={i} className="h-[21px] border-b border-[#dedede]">
                <td className="border-r border-[#dedede] p-0">
                  <LayerName layer={layer} last={!!layers[i + 1]?.group} />
                </td>
                <td className={clsx("border-r border-[#dedede] p-0", layer.focus && "outline-2 -outline-offset-1 outline-[#808080]")}>
                  <Tick label={`显示图元 ${layer.name}`} state={layer.state} />
                </td>
                <td className="border-r border-[#dedede] p-0">
                  <Tick label={`显示名称 ${layer.name}`} disabled={layer.nameOff} />
                </td>
              </tr>
            ))}
          </tbody>
        </table>
        <i className="absolute top-[320px] right-1 h-[188px] w-1 rounded-full bg-[#e8e8e8]" />
      </div>
      <div className="flex justify-end px-2 py-[6px]">
        <button className="h-[26px] rounded-sm border border-[#c8c8c8] px-2">恢复默认设置</button>
      </div>
    </aside>
  );
}

/* ---------- status bar ---------- */

const snaps = [
  { icon: "ortho", label: "正交" },
  { icon: "snapRect", label: "对象捕捉", caret: true, on: true },
  { icon: "cross", label: "交点" },
  { icon: "angle", label: "角度", caret: true, on: true },
  { icon: "plusMinus", label: "动态输入", caret: true },
  { icon: "stack", label: "跨层" },
  { icon: "polyArc", label: "折线" },
];

function StatusBar() {
  return (
    <div className="flex h-[31px] items-center bg-[#fcfcfc] text-[12px] whitespace-nowrap">
      <span className="w-[90px] pl-[2px]">层高： 1.7</span>
      <span className="w-[141px] pl-[2px]">标高： -1.7~0</span>
      <span className="w-[111px]">选中图元：0</span>
      <span className="w-[110px]">隐藏图元：0</span>
      <div className="flex gap-1">
        {snaps.map((s) => (
          <button
            key={s.label}
            aria-label={s.label}
            className={clsx(
              "flex h-[25px] items-center justify-center gap-[6px] rounded-xs border",
              s.caret ? "w-9" : "w-[25px]",
              s.on ? "border-[#3b8df0] bg-[#d6e6fb]" : "border-[#a5a5a5] bg-white",
              s.icon === "cross" && "mx-px"
            )}
          >
            <Glyph name={s.icon} className="size-[15px]" />
            {s.caret && <Caret className="text-[#4b5468]" />}
          </button>
        ))}
      </div>
      <Glyph name="expand" className="ml-[14px] size-4" />
      <span className="ml-1">在此输入集水坑放坡的角度；输入范围：(0,90] 之间的实数</span>
      <span className="mr-[11px] ml-auto flex items-center gap-[6px]">
        <svg viewBox="0 0 14 14" className="size-[14px]" aria-hidden="true">
          <circle cx="7" cy="7" r="7" fill="#64b900" />
          <path d="M3 7l3 3 5-5" fill="none" stroke="#fff" />
        </svg>
        实时计算已完成
      </span>
    </div>
  );
}

/* ---------- taskbar ---------- */

const apps = [
  {
    label: "G",
    art: (
      <>
        <path d="M31 1c-4 7-9 7-14 7-4 0-7 3-7 8s3 8 7 8c3 0 5-1 5-4l-5 2c-3-1-3-5 0-7 4-2 10 0 11 5 1 6-4 11-12 11S2 26 1 17C0 11 4 6 8 3c0 2 0 2 1 2 6-3 14-1 22-4z" fill="#1795ee" stroke="#0b6fce" />
        <path d="M5 14C6 9 9 7 14 6" fill="none" stroke="#7cd0ff" strokeWidth="2" />
      </>
    ),
  },
  {
    label: "GTJ2025",
    active: true,
    art: (
      <>
        <rect x="1" y="1" width="30" height="30" rx="4" fill="#2a66ff" />
        <path d="M6 13L20 6l7 3-3 4-9 3-4-3z" fill="#fff" />
        <path d="M13 15l5 1v12l-5-3z" fill="#fff" />
      </>
    ),
  },
  {
    label: "帮助",
    art: (
      <>
        <path d="M4 12h12v19H4z" fill="#fff" stroke="#333" />
        <path d="M6 17h8M6 20h8M6 23h8M6 26h8" stroke="#888" />
        <path d="M14 9c0-9 12-8 12-1 0 5-6 5-6 11M20 23v4" fill="none" stroke="#222" strokeWidth="6" />
        <path d="M14 9c0-9 12-8 12-1 0 5-6 5-6 11M20 23v4" fill="none" stroke="#ffe600" strokeWidth="4" />
      </>
    ),
  },
  {
    label: "资源管理器",
    art: (
      <>
        <path d="M1 4h10l2 3h17v20H1z" fill="#e8c65c" />
        <path d="M4 2h6v5H4z" fill="#3fae49" />
        <path d="M12 4h8v4h-8z" fill="#d85a3a" />
        <path d="M1 9h30v18H1z" fill="#f6e08e" />
        <path d="M6 30V20h20v10h-4v-6H10v6z" fill="#a6d8f2" stroke="#5aa6cf" />
      </>
    ),
  },
  {
    label: "浏览器",
    art: (
      <>
        <circle cx="16" cy="17" r="14" fill="#f2faee" />
        <path d="M25 18H10M25 18c0-12-17-12-17 0 0 10 13 12 17 4M3 28C1 20 14 4 29 3" fill="none" stroke="#4fb51f" strokeWidth="4" />
      </>
    ),
  },
  {
    label: "I",
    art: (
      <>
        <rect x="1" y="1" width="30" height="30" rx="4" fill="#d9f3f2" />
        <path d="M8 6h16v6l-5 2v5l5 2v5H8v-5l5-2v-5l-5-2z" fill="#12a4a6" />
      </>
    ),
  },
];

const tray = [
  { label: "G", art: <path d="M15 1C9 3 1 2 1 9s12 9 13 1H9M3 12c3 4 9 3 11-1" fill="none" stroke="#2aa5f5" strokeWidth="3" /> },
  { label: "浏览器", art: <><circle cx="8" cy="8" r="7" fill="#fff" /><path d="M12 9H5c0-6 7-5 7-1M5 9c1 4 5 4 7 2M1 13C2 6 9 2 15 2" fill="none" stroke="#4fb51f" strokeWidth="2" /></> },
  { label: "云盘", art: <><rect width="16" height="16" rx="3" fill="#f8a81c" /><path d="M5 11c-3 0-3-4 0-4 1-4 6-3 6 0 4 0 3 4 0 4-2 0-3-3-5-3" fill="none" stroke="#fff" strokeWidth="1.500" /></> },
  { label: "防火墙", art: <><rect width="16" height="16" rx="2" fill="#fff" /><path d="M2 11h12v4H2z" fill="#f08030" /><path d="M12 3C6 0 1 5 4 11h10c-6-1-6-5-2-5z" fill="#1a73e8" /></> },
  { label: "安全删除硬件", art: <><path d="M2 1h6v4h2v7H1V5h1z" fill="#999" /><circle cx="11" cy="11" r="5" fill="#2faa2f" /><path d="M9 11l2 2 3-4" fill="none" stroke="#fff" strokeWidth="1.500" /></> },
  { label: "安全卫士", art: <><circle cx="8" cy="8" r="7" fill="#f7d51d" /><path d="M1 8c0-8 12-9 14-2" fill="none" stroke="#3a9a20" strokeWidth="2" /><path d="M8 4v8M4 8h8" stroke="#1e7a12" strokeWidth="2" /></> },
  { label: "音量管理", art: <><path d="M1 6h3l5-5v14l-5-5H1z" fill="#d8553a" stroke="#f3c5b8" strokeWidth="0.500" /><path d="M12 4v8M14 3v10" stroke="#a33" /></> },
  { label: "网络", art: <path d="M1 14v-2M4 14v-4M7 14V8M10 14V6M13 14V3M15 14V2" stroke="#fff" strokeWidth="2" /> },
  { label: "音量", art: <><path d="M1 6h3l4-5v14l-4-5H1z" fill="#fff" /><path d="M10 5c2 2 2 4 0 6M12 3c4 3 4 7 0 10" fill="none" stroke="#fff" /></> },
];

function Taskbar() {
  return (
    <footer className="relative flex h-10 items-center border-t-2 border-[#1f3f5c] bg-[linear-gradient(100deg,#1f6699_0%,#2a7fb5_4%,#58aed9_16%,#55aedb_24%,#3a95cb_32%,#4ba3d6_40%,#2f86c8_50%,#2a7dc8_62%,#1c5c9e_72%,#1a4f88_85%,#17406e_100%)]">
      <svg viewBox="0 0 700 38" className="absolute inset-y-0 left-[1100px] h-[38px] w-[700px]" preserveAspectRatio="none" aria-hidden="true">
        <path d="M190 0c30 8 60 20 80 38h14C262 20 230 6 205 0z" fill="#7cc4ec" opacity="0.8" />
        <path d="M0 38C90 20 180 8 290 0H120C70 10 30 20 0 38z" fill="#5cb0e6" opacity="0.3" />
      </svg>
      <button aria-label="开始" className="relative ml-2">
        <svg viewBox="0 0 38 38" className="size-[37px]">
          <defs>
            <radialGradient id="orb" cx="0.5" cy="0.9" r="0.9">
              <stop offset="0" stopColor="#19d4f5" />
              <stop offset="0.4" stopColor="#1673a8" />
              <stop offset="1" stopColor="#7f9fb5" />
            </radialGradient>
          </defs>
          <circle cx="19" cy="19" r="18" fill="url(#orb)" stroke="#16466a" />
          <path d="M10 11c3-2 5-2 8 0l-2 8c-2-2-5-2-8 0z" fill="#e8582a" />
          <path d="M19 12c3 2 5 2 9 0l-2 8c-3 2-6 1-9-1z" fill="#8cc63f" />
          <path d="M8 20c3-2 5-1 8 0l-2 8c-2-2-5-2-8 0z" fill="#3fa0e8" />
          <path d="M17 21c3 2 5 2 9 0l-2 8c-3 2-6 1-9-1z" fill="#fcc52c" />
        </svg>
      </button>
      <i className="relative ml-[12px] h-7 w-[9px] bg-[radial-gradient(#12466e_1px,transparent_1px)] bg-[length:3px_4px]" />
      <div className="relative ml-[10px] flex gap-1">
        {apps.map((a) => (
          <button
            key={a.label}
            aria-label={a.label}
            className={clsx(
              "flex h-[38px] w-[58px] items-center justify-center rounded-xs border border-[#c5e2f2] outline outline-[#205a80]",
              a.active
                ? "bg-gradient-to-br from-[#f2f8fc] to-[#7dbde0]"
                : "bg-gradient-to-br from-[#a6cde4] via-[#5ba6cf] to-[#5fb0dc]"
            )}
          >
            <svg viewBox="0 0 32 32" className="size-8">{a.art}</svg>
          </button>
        ))}
      </div>
      <div className="relative ml-auto flex h-full items-center">
        <i className="h-7 w-[9px] bg-[radial-gradient(#0f3050_1px,transparent_1px)] bg-[length:3px_4px]" />
        <button aria-label="输入法" className="ml-2">
          <svg viewBox="0 0 16 16" className="size-4">
            <path d="M0 6h16v8H0z" fill="#ddd" />
            <path d="M2 8h12M2 10h12M4 12h8" stroke="#555" strokeDasharray="1 1" />
            <path d="M8 6c0-3 5 0 6-4" fill="none" stroke="#bbb" />
          </svg>
        </button>
        <button aria-label="帮助" className="mb-1 ml-2 flex size-4 items-center justify-center rounded-full border border-[#a9b3e8] bg-[#0f1f9c] text-[11px] font-bold text-white">
          ?
        </button>
        <button aria-label="语言栏选项" className="mb-2 ml-[10px] flex flex-col items-center gap-2">
          <svg viewBox="0 0 8 6" className="h-[6px] w-2 overflow-visible" fill="none" stroke="#fff">
            <path d="M2 2V0h6v4H6M0 2h5v4H0z" />
          </svg>
          <Caret className="text-white" />
        </button>
        <div className="ml-[10px] flex gap-2">
          {tray.map((t) => (
            <button key={t.label} aria-label={t.label}>
              <svg viewBox="0 0 16 16" className="size-4">{t.art}</svg>
            </button>
          ))}
        </div>
        <button className="ml-4 w-[62px] text-center text-[12px] leading-[18px] text-white">
          15:08
          <br />
          2024/7/10
        </button>
        <button aria-label="操作中心" className="ml-4">
          <svg viewBox="0 0 17 15" className="h-[15px] w-[17px]">
            <path d="M0 0h17v15H0z" fill="#fff" />
            <path d="M6 4h2l3 3-3 4H6z" fill="#17335c" />
          </svg>
        </button>
        <button aria-label="显示桌面" className="mr-[1px] ml-3 h-full w-3 border border-[#7f9cb8] bg-gradient-to-b from-[#6d8fb0] to-[#1f4470]" />
      </div>
    </footer>
  );
}

export default function App() {
  return (
    <div className="flex h-screen flex-col overflow-hidden bg-white font-['Noto_Sans','Noto_Sans_CJK_SC',sans-serif] text-[#333]">
      <TitleBar />
      <MenuBar />
      <Ribbon />
      <PickerBar />
      <div className="flex min-h-0 flex-1">
        <NavPanel />
        <div className="mx-1 flex w-[291px] shrink-0 flex-col gap-1">
          <ComponentPanel />
          <PropertyPanel />
        </div>
        <Viewport />
        <DisplayPanel />
      </div>
      <StatusBar />
      <Taskbar />
    </div>
  );
}
